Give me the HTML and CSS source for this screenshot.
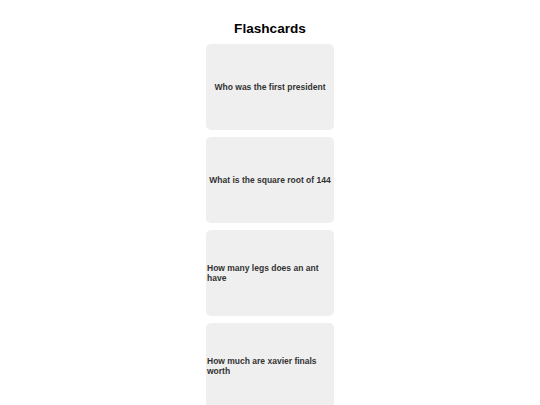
FILE: index.html
```html
<!DOCTYPE html>
<html>
<head>
<meta charset="utf-8">
<link rel="stylesheet" href="styles.css">
</head>
<body>
<div class="app">
  <h1 class="title">Flashcards</h1>
  <div class="deck">
    <div class="card"><span class="q">Who was the first president</span></div>
    <div class="card"><span class="q">What is the square root of 144</span></div>
    <div class="card"><span class="q">How many legs does an ant have</span></div>
    <div class="card"><span class="q">How much are xavier finals worth</span></div>
  </div>
</div>
</body>
</html>
```
FILE: styles.css
```css
html, body {
  margin: 0;
  padding: 0;
  background: #ffffff;
}
body {
  font-family: "Liberation Sans", Arial, sans-serif;
  color: #000;
}
.app {
  display: flex;
  flex-direction: column;
  align-items: center;
  padding-top: 21px;
}
.title {
  font-size: 13.6px;
  font-weight: bold;
  margin: 0 0 7px 0;
  line-height: 16px;
}
.deck {
  display: flex;
  flex-direction: column;
  gap: 7px;
}
.card {
  width: 128px;
  height: 86px;
  box-sizing: border-box;
  padding: 0 1px;
  background: #efefef;
  border-radius: 5px;
  display: flex;
  align-items: center;
  justify-content: center;
}
.q {
  font-size: 8.5px;
  font-weight: bold;
  line-height: 10px;
  color: #333;
}
```
